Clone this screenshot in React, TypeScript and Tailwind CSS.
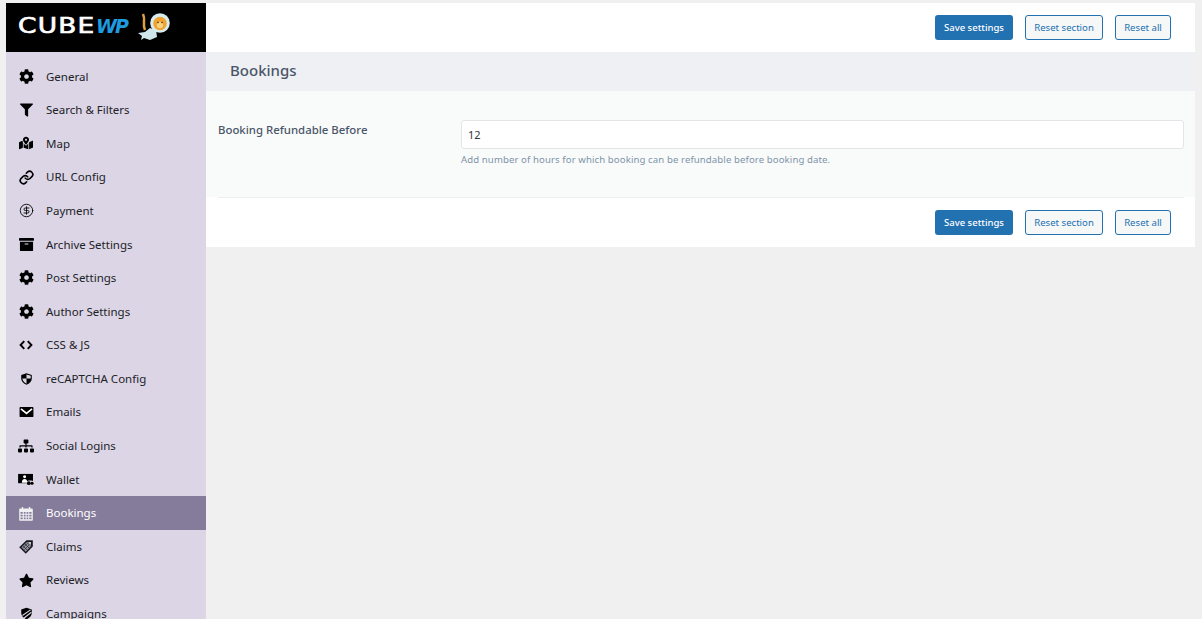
import React from "react";
import { FaCog, FaFilter, FaMapMarkedAlt, FaArchive, FaSitemap, FaStar } from "react-icons/fa";
import { CircleDollarSign, Link as LinkIcon } from "lucide-react";

type IconProps = { className?: string };

const Dollar = ({ className }: IconProps) => <CircleDollarSign className={className} strokeWidth={1.4} />;
const ChainIcon = ({ className }: IconProps) => <LinkIcon className={className} strokeWidth={2.6} />;
const Code = ({ className }: IconProps) => (
  <svg viewBox="0 0 16 16" className={className} fill="none" stroke="currentColor" strokeWidth="2.200">
    <path d="M6 3.500 1.800 8 6 12.500M10 3.500 14.200 8 10 12.500" />
  </svg>
);
const Shield = ({ className }: IconProps) => (
  <svg viewBox="0 0 16 16" className={className} fill="currentColor">
    <path d="M8 1 14.500 3v4.500c0 3.500-2.800 6.200-6.500 7.700-3.700-1.500-6.500-4.200-6.500-7.700V3z" />
    <path d="M8 2.600 13.200 4v3.500H8zM8 7.500H2.900C3.300 10.500 5.200 12.600 8 13.800z" fill="#dbd5e5" />
  </svg>
);
const Mail = ({ className }: IconProps) => (
  <svg viewBox="0 0 16 13" className={className}>
    <rect x="0.500" y="1" width="15" height="11" rx="1" fill="currentColor" />
    <path d="M2 3 8 8 14 3" fill="none" stroke="#fff" strokeWidth="1.800" />
  </svg>
);
const Wallet = ({ className }: IconProps) => (
  <svg viewBox="0 0 17 14" className={className}>
    <rect x="0" y="1" width="16" height="10" fill="currentColor" />
    <circle cx="7" cy="4" r="1.600" fill="#fff" />
    <path d="M4 10.500c0-3 1.500-4 3-4s3 1 3 4z" fill="#fff" />
    <rect x="9" y="8" width="8" height="6" rx="3" fill="#dbd5e5" />
    <circle cx="11.500" cy="11" r="2" fill="currentColor" />
    <circle cx="15" cy="11" r="1.700" fill="currentColor" />
  </svg>
);
const Calendar = ({ className }: IconProps) => (
  <svg viewBox="0 0 14 15" className={className} fill="currentColor">
    <path fillRule="evenodd" d="M1 2.500h1.800V1h1.400v1.500h5.600V1h1.400v1.500H13a.8.8 0 0 1 .8.8V14a.8.8 0 0 1-.8.8H1a.8.8 0 0 1-.8-.8V3.300a.8.8 0 0 1 .8-.8zM1.500 6v1.700h2.200V6zm3.300 0v1.700h1.800V6zm2.800 0v1.700h1.700V6zm2.700 0v1.700h2.200V6zM1.500 8.800v1.700h2.200V8.800zm3.300 0v1.700h1.800V8.800zm2.800 0v1.700h1.700V8.800zm2.700 0v1.700h2.200V8.800zM1.500 11.500v1.800h2.200v-1.800zm3.300 0v1.800h1.800v-1.800zm2.800 0v1.800h1.700v-1.800zm2.700 0v1.800h2.200v-1.800z" />
  </svg>
);
const Claim = ({ className }: IconProps) => (
  <svg viewBox="0 0 16 16" className={className}>
    <path d="M8.500 1.200 14.800 1.200 14.800 7.500 7.800 14.800 1.200 8.200z" fill="#1a1a1a" />
    <path d="M8.900 3 3.400 8.300 7.800 12.700 13 7 13 3z" fill="#8d8d9c" />
    <path d="M5 7l4 4M7 5l4 4M9 3.500l3 3M6.500 10.500 11 6M5 8.800 9.500 4.300" stroke="#2a2a3a" strokeWidth="0.700" />
    <circle cx="12" cy="4" r="1" fill="#dbd5e5" />
  </svg>
);
const Campaign = ({ className }: IconProps) => (
  <svg viewBox="0 0 16 16" className={className} fill="currentColor">
    <path d="M8 1 14.500 3v4.500c0 3.500-2.800 6.200-6.500 7.700-3.700-1.500-6.500-4.200-6.500-7.700V3z" />
    <path d="M3 10.500 13 3.500M5 13.500 14 6.500" stroke="#dbd5e5" strokeWidth="1.300" fill="none" />
  </svg>
);

const items: { label: string; Icon: React.ComponentType<IconProps>; size: string; active?: boolean }[] = [
  { label: "General", Icon: FaCog, size: "w-[15px] h-[15px]" },
  { label: "Search & Filters", Icon: FaFilter, size: "w-[13px] h-[14px]" },
  { label: "Map", Icon: FaMapMarkedAlt, size: "w-[14px] h-[14px]" },
  { label: "URL Config", Icon: ChainIcon, size: "w-[15px] h-[15px]" },
  { label: "Payment", Icon: Dollar, size: "w-[15px] h-[15px]" },
  { label: "Archive Settings", Icon: FaArchive, size: "w-[15px] h-[15px]" },
  { label: "Post Settings", Icon: FaCog, size: "w-[15px] h-[15px]" },
  { label: "Author Settings", Icon: FaCog, size: "w-[15px] h-[15px]" },
  { label: "CSS & JS", Icon: Code, size: "w-[14px] h-[14px]" },
  { label: "reCAPTCHA Config", Icon: Shield, size: "w-[13px] h-[14px]" },
  { label: "Emails", Icon: Mail, size: "w-[15px] h-[12px]" },
  { label: "Social Logins", Icon: FaSitemap, size: "w-[16px] h-[14px]" },
  { label: "Wallet", Icon: Wallet, size: "w-[16px] h-[13px]" },
  { label: "Bookings", Icon: Calendar, size: "w-[14px] h-[15px]", active: true },
  { label: "Claims", Icon: Claim, size: "w-[16px] h-[16px]" },
  { label: "Reviews", Icon: FaStar, size: "w-[15px] h-[15px]" },
  { label: "Campaigns", Icon: Campaign, size: "w-[13px] h-[13px]" },
];

const Bar = () => (
  <div className="flex items-center justify-end pr-6 h-[49px]">
    <button className="w-[78px] h-[25px] pt-[1px] rounded-[3px] bg-[#2271b1] text-white text-[9.500px] font-medium mr-3">Save settings</button>
    <button className="w-[78px] h-[25px] pt-[1px] rounded-[3px] border border-[#2271b1] bg-[#f6f7f7] text-[#2271b1] text-[9.600px] mr-3">Reset section</button>
    <button className="w-[56px] h-[25px] pt-[1px] rounded-[3px] border border-[#2271b1] bg-[#f6f7f7] text-[#2271b1] text-[9.600px]">Reset all</button>
  </div>
);

export default function App() {
  return (
    <div className="h-[619px] overflow-hidden bg-[#f0f0f0] pt-[3px] pl-[6px] pr-[7px] flex items-start font-['Noto_Sans',sans-serif]">
      <aside className="w-[200px] h-[616px] shrink-0 bg-[#dbd5e5] overflow-hidden">
        <div className="h-[49px] bg-black flex items-center pl-3">
          <div className="w-[110px] flex items-baseline mb-[4px] font-['DejaVu_Sans',sans-serif] text-[22px] leading-none">
            <span className="w-[78px] shrink-0 inline-block origin-left scale-x-[1.2] text-white tracking-[1px] [-webkit-text-stroke:0.700px_white]">CUBE</span>
            <span className="text-[#1f9be0] italic font-bold tracking-[-2px] text-[19px]">WP</span>
          </div>
          <svg viewBox="0 0 34 29" className="w-[34px] h-[29px] ml-[9px]">
            <path d="M8 17C5 11 9 7 6 1" stroke="#e0a040" strokeWidth="2.500" fill="none" />
            <path d="M1 20 8 19 13 15 19 17 20 24 13 27 7 25 4 27 5 23Z" fill="#cfe7ec" />
            <circle cx="23" cy="10" r="9.800" fill="#d9edf0" />
            <circle cx="23" cy="10.500" r="6.800" fill="#f0a32f" />
            <circle cx="23" cy="12" r="3.200" fill="#f8d27c" />
            <circle cx="21" cy="9.500" r="0.800" fill="#3a2a10" />
            <circle cx="25" cy="9.500" r="0.800" fill="#3a2a10" />
          </svg>
        </div>
        <nav className="pt-[7.500px]">
          {items.map(({ label, Icon, size, active }) => (
            <div key={label} className={`flex items-center h-[33.600px] ${active ? "bg-[#857c9c] text-white" : "text-[#1d2327]"}`}>
              <span className="w-[40px] flex justify-center">
                <Icon className={`${size} ${active ? "text-[#f0f0f1]" : "text-black"}`} />
              </span>
              <span className="text-[11.500px] leading-none">{label}</span>
            </div>
          ))}
        </nav>
      </aside>
      <main className="flex-1 bg-white">
        <Bar />
        <h2 className="h-[39px] pb-[2px] bg-[#eef0f4] flex items-center pl-6 text-[15px] font-medium text-[#4a5568]">Bookings</h2>
        <div className="bg-[#f9fbfb] h-[106px] pl-3 pr-[11px] pt-[30px] flex">
          <label className="w-[243px] text-[11.400px] font-medium leading-[18px] text-[#4a5568]">Booking Refundable Before</label>
          <div className="flex-1">
            <input
              readOnly
              value="12"
              className="w-full h-[29px] -mt-[1px] block bg-white border border-[#e2e4e7] rounded-[3px] px-[6px] text-[11px] text-[#32373c]"
            />
            <p className="mt-[5px] text-[9.600px] leading-[12px] tracking-[0.100px] text-[#7f93a8]">Add number of hours for which booking can be refundable before booking date.</p>
          </div>
        </div>
        <div className="border-t border-[#eceeef] ml-3 mr-[11px]"></div>
        <Bar />
      </main>
    </div>
  );
}
